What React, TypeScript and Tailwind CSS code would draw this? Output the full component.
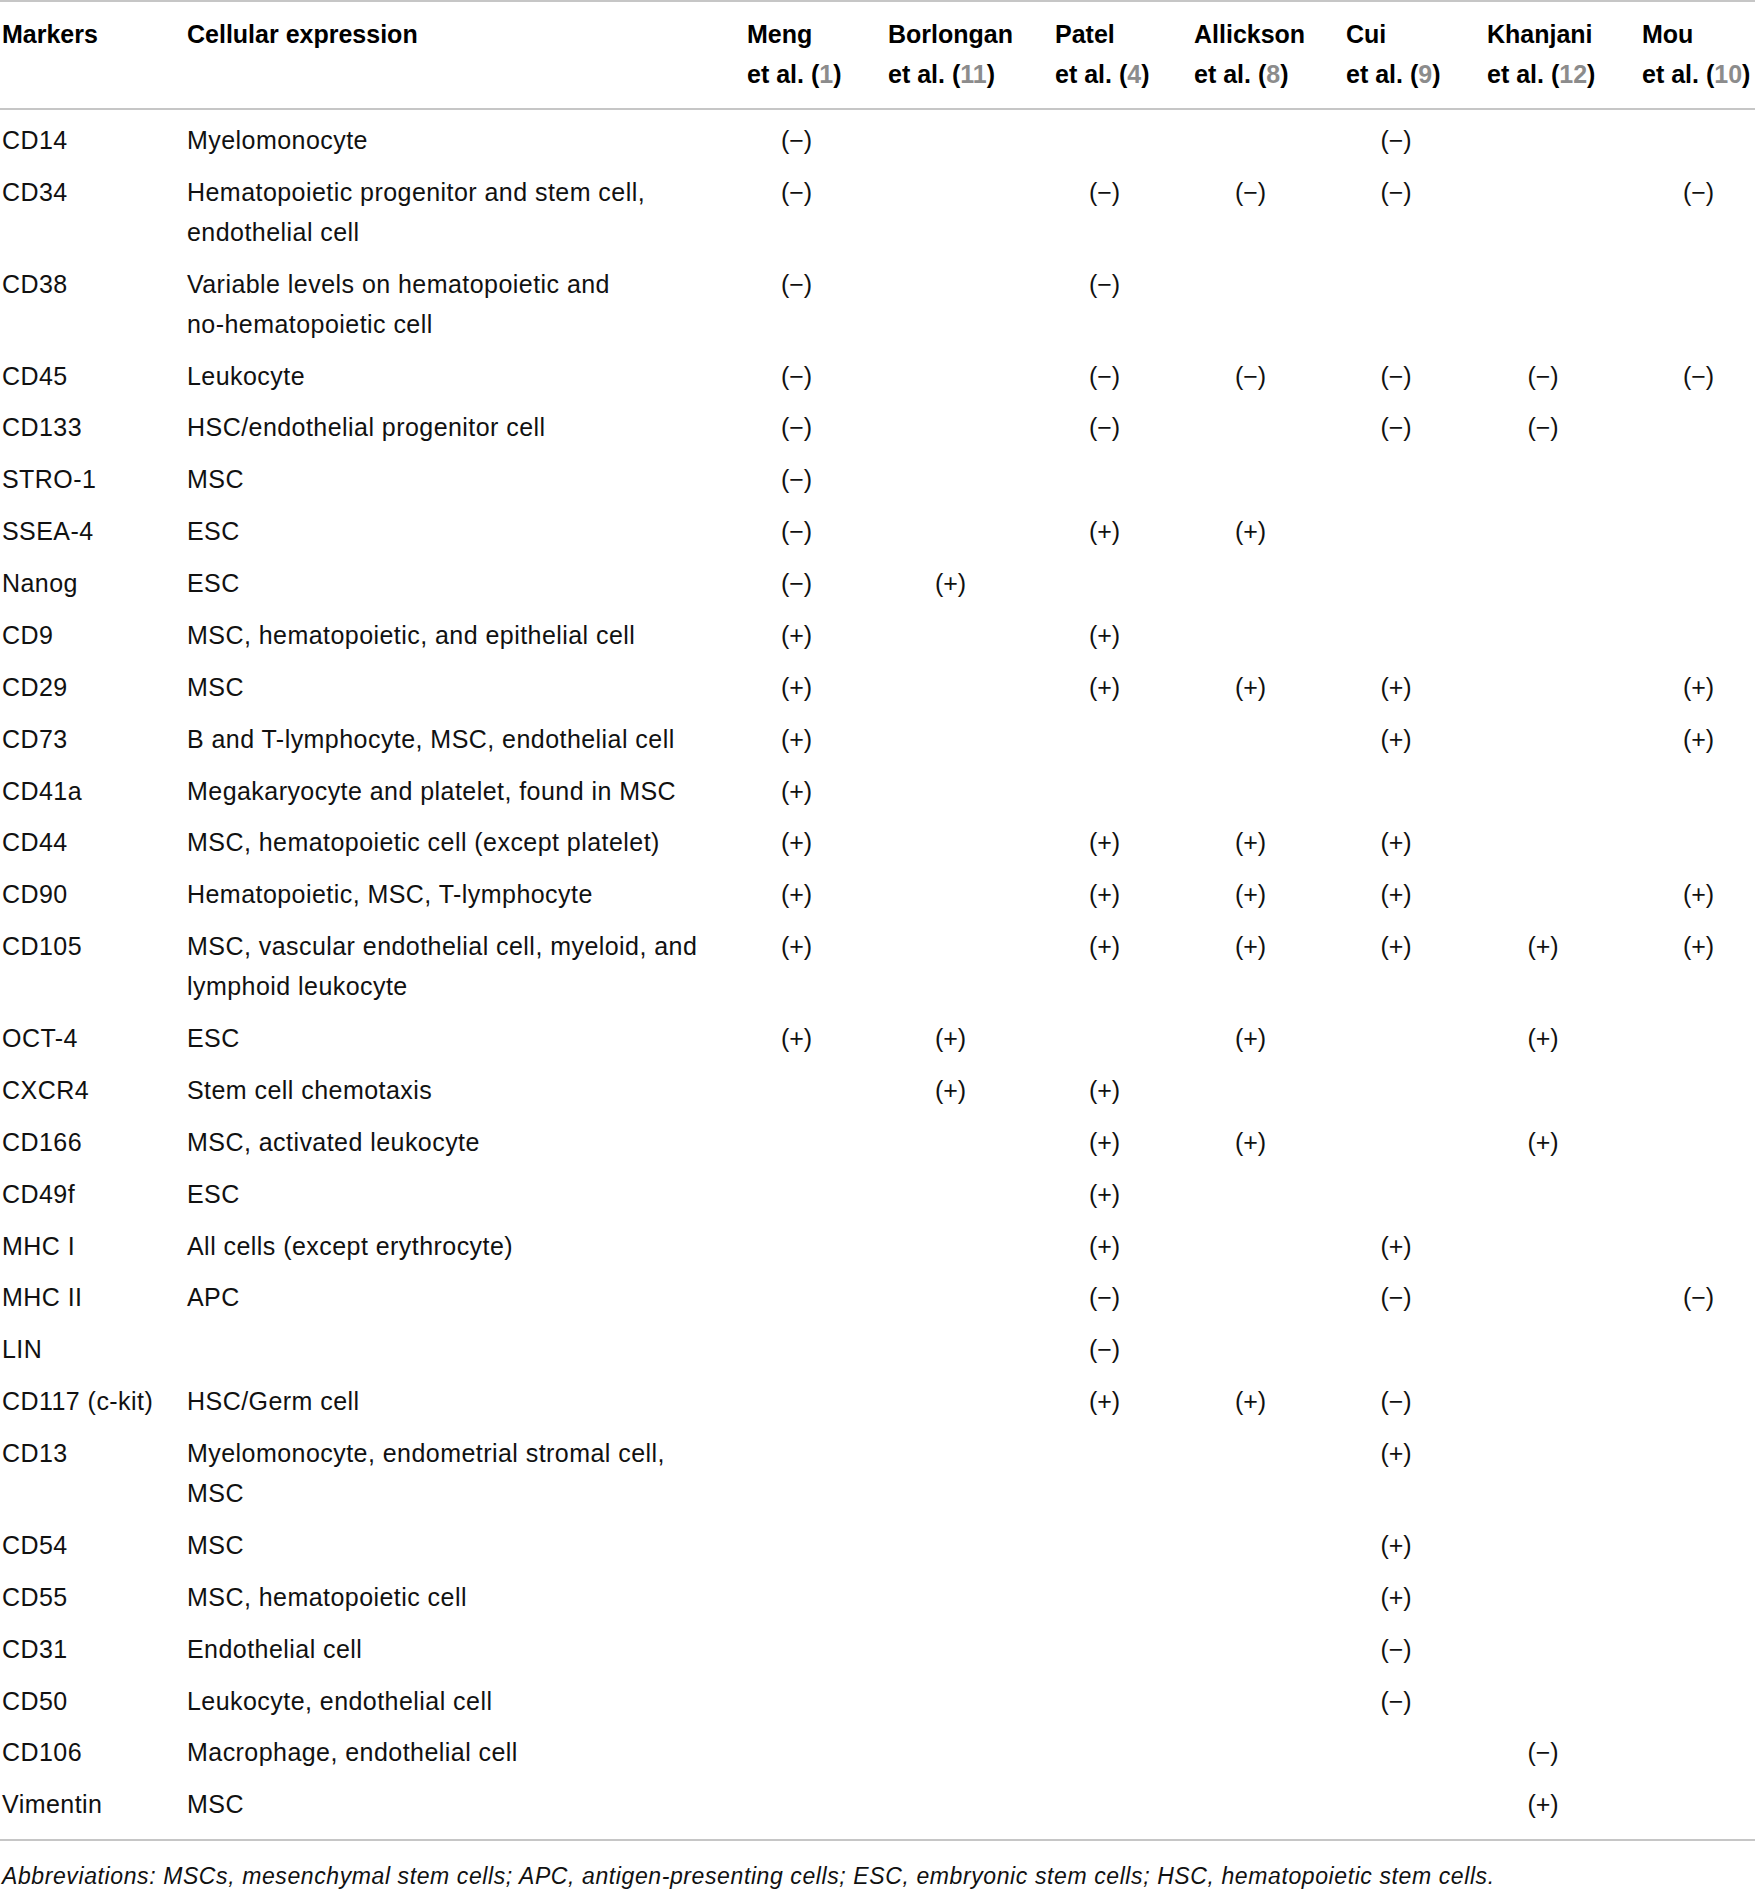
import React from "react";

type Row = { m: string; e: string[]; v: string };

const rows: Row[] = [
  { m: "CD14", e: ["Myelomonocyte"], v: "-   -  " },
  { m: "CD34", e: ["Hematopoietic progenitor and stem cell,", "endothelial cell"], v: "- --- -" },
  { m: "CD38", e: ["Variable levels on hematopoietic and", "no-hematopoietic cell"], v: "- -    " },
  { m: "CD45", e: ["Leukocyte"], v: "- -----" },
  { m: "CD133", e: ["HSC/endothelial progenitor cell"], v: "- - -- " },
  { m: "STRO-1", e: ["MSC"], v: "-      " },
  { m: "SSEA-4", e: ["ESC"], v: "- ++   " },
  { m: "Nanog", e: ["ESC"], v: "-+     " },
  { m: "CD9", e: ["MSC, hematopoietic, and epithelial cell"], v: "+ +    " },
  { m: "CD29", e: ["MSC"], v: "+ +++ +" },
  { m: "CD73", e: ["B and T-lymphocyte, MSC, endothelial cell"], v: "+   + +" },
  { m: "CD41a", e: ["Megakaryocyte and platelet, found in MSC"], v: "+      " },
  { m: "CD44", e: ["MSC, hematopoietic cell (except platelet)"], v: "+ +++  " },
  { m: "CD90", e: ["Hematopoietic, MSC, T-lymphocyte"], v: "+ +++ +" },
  { m: "CD105", e: ["MSC, vascular endothelial cell, myeloid, and", "lymphoid leukocyte"], v: "+ +++++" },
  { m: "OCT-4", e: ["ESC"], v: "++ + + " },
  { m: "CXCR4", e: ["Stem cell chemotaxis"], v: " ++    " },
  { m: "CD166", e: ["MSC, activated leukocyte"], v: "  ++ + " },
  { m: "CD49f", e: ["ESC"], v: "  +    " },
  { m: "MHC I", e: ["All cells (except erythrocyte)"], v: "  + +  " },
  { m: "MHC II", e: ["APC"], v: "  - - -" },
  { m: "LIN", e: [""], v: "  -    " },
  { m: "CD117 (c-kit)", e: ["HSC/Germ cell"], v: "  ++-  " },
  { m: "CD13", e: ["Myelomonocyte, endometrial stromal cell,", "MSC"], v: "    +  " },
  { m: "CD54", e: ["MSC"], v: "    +  " },
  { m: "CD55", e: ["MSC, hematopoietic cell"], v: "    +  " },
  { m: "CD31", e: ["Endothelial cell"], v: "    -  " },
  { m: "CD50", e: ["Leukocyte, endothelial cell"], v: "    -  " },
  { m: "CD106", e: ["Macrophage, endothelial cell"], v: "     - " },
  { m: "Vimentin", e: ["MSC"], v: "     + " },
];

const valW = [
  "w-[99px]",
  "w-[125px]",
  "w-[99px]",
  "w-[113px]",
  "w-[100px]",
  "w-[112px]",
  "w-[113px]",
];

const heads: [string, string][] = [
  ["Meng", "1"],
  ["Borlongan", "11"],
  ["Patel", "4"],
  ["Allickson", "8"],
  ["Cui", "9"],
  ["Khanjani", "12"],
  ["Mou", "10"],
];

const gridCls =
  "grid grid-cols-[185px_560px_141px_167px_139px_152px_141px_155px_114px] ml-[2px]";

export default function App() {
  return (
    <div
      className="w-[1755px] bg-white text-[#111]"
      style={{ fontFamily: '"Liberation Sans", Arial, sans-serif' }}
    >
      <div className="border-t-2 border-b-2 border-[#c6c6c6] pt-[12px] pb-[14px]">
        <div className={`${gridCls} text-[25px] leading-[40px] font-bold text-black`}>
          <div>Markers</div>
          <div>Cellular expression</div>
          {heads.map(([n, r]) => (
            <div key={n}>
              <div>{n}</div>
              <div className="whitespace-nowrap">
                et al. (<span className="text-[#8c8c8c]">{r}</span>)
              </div>
            </div>
          ))}
        </div>
      </div>
      <div className="border-b-2 border-[#c6c6c6] pt-[4px] pb-[9px]">
        {rows.map((r) => (
          <div
            key={r.m}
            className={`${gridCls} text-[25px] leading-[40px] tracking-[0.45px] py-[5.95px]`}
          >
            <div className="whitespace-nowrap">{r.m}</div>
            <div className="whitespace-nowrap">
              {r.e.map((l, i) => (
                <div key={i}>{l}</div>
              ))}
            </div>
            {r.v.split("").map((c, i) => (
              <div key={i}>
                <div className={`${valW[i]} text-center tracking-normal`}>
                  {c === "-" ? "(\u2212)" : c === "+" ? "(+)" : ""}
                </div>
              </div>
            ))}
          </div>
        ))}
      </div>
      <div className="ml-[2px] pt-[21px] pb-[4px] text-[23px] leading-[28px] tracking-[0.6px] italic whitespace-nowrap">
        Abbreviations: MSCs, mesenchymal stem cells; APC, antigen-presenting cells; ESC,
        embryonic stem cells; HSC, hematopoietic stem cells.
      </div>
    </div>
  );
}
